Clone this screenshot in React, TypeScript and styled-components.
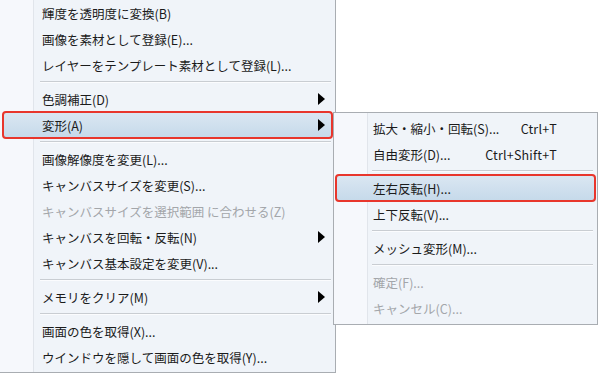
import styled, { createGlobalStyle } from "styled-components";

const colors = {
  page: "#ffffff",
  menu: "#f0f4f9",
  gutter: "#f6f8fc",
  gutterLine: "#e1e5eb",
  border: "#a9adb2",
  text: "#1b1b1b",
  disabled: "#a3a6aa",
  separator: "#c9cdd2",
  highlightTop: "#dbe7f2",
  highlightBottom: "#c5d9ea",
  annotation: "#e8362c",
};

const GlobalStyle = createGlobalStyle`
  html, body {
    margin: 0;
    padding: 0;
    background: ${colors.page};
  }
`;

const Screen = styled.div`
  display: flex;
  align-items: flex-start;
  width: 598px;
  height: 375px;
  overflow: hidden;
  background: ${colors.page};
  font-family: "Noto Sans CJK JP", "Noto Sans", sans-serif;
  font-size: 12.5px;
  color: ${colors.text};
`;

const Menu = styled.div<{ $width: number; $top: number; $pull: number; $bordered: boolean }>`
  display: flex;
  flex-direction: column;
  flex-shrink: 0;
  box-sizing: border-box;
  width: ${(p) => p.$width}px;
  margin-top: ${(p) => p.$top}px;
  margin-left: ${(p) => -p.$pull}px;
  padding: ${(p) => (p.$bordered ? "2px 0 3px" : "0 0 2px")};
  border: 1px solid ${colors.border};
  border-left-width: ${(p) => (p.$bordered ? 1 : 0)}px;
  border-top-width: ${(p) => (p.$bordered ? 1 : 0)}px;
  background: linear-gradient(
    to right,
    ${colors.gutter} 0,
    ${colors.gutter} 33px,
    ${colors.gutterLine} 33px,
    ${colors.gutterLine} 34px,
    ${colors.menu} 34px
  );
`;

const Item = styled.div<{ $pad: number; $right: number; $inset: number; $active?: boolean; $disabled?: boolean }>`
  position: relative;
  display: grid;
  grid-template-columns: 1fr auto auto;
  align-items: center;
  height: 26px;
  margin: 0 ${(p) => p.$inset}px;
  padding: 0 ${(p) => p.$right}px 0 ${(p) => p.$pad - p.$inset}px;
  white-space: nowrap;
  color: ${(p) => (p.$disabled ? colors.disabled : colors.text)};
  background: ${(p) =>
    p.$active
      ? `linear-gradient(to bottom, ${colors.highlightTop}, ${colors.highlightBottom})`
      : "transparent"};

  &::after {
    content: "";
    display: ${(p) => (p.$active ? "block" : "none")};
    position: absolute;
    inset: -1px -1px;
    border: 2px solid ${colors.annotation};
    border-radius: 4px;
  }
`;

const Shortcut = styled.span`
  justify-self: end;
  padding-left: 16px;
  letter-spacing: 0.2px;
`;

const Arrow = styled.span`
  width: 0;
  height: 0;
  border-left: 7px solid #000;
  border-top: 6px solid transparent;
  border-bottom: 6px solid transparent;
`;

const Separator = styled.div<{ $from: number; $to: number }>`
  height: 8px;
  margin: 0 ${(p) => p.$to}px 0 ${(p) => p.$from}px;
  display: flex;
  flex-direction: column;
  justify-content: center;

  &::before {
    content: "";
    height: 1px;
    background: ${colors.separator};
  }
  &::after {
    content: "";
    height: 1px;
    background: #fbfcfe;
  }
`;

type Entry =
  | { sep: true }
  | { label: string; shortcut?: string; sub?: boolean; active?: boolean; disabled?: boolean };

const mainItems: Entry[] = [
  { label: "輝度を透明度に変換(B)" },
  { label: "画像を素材として登録(E)..." },
  { label: "レイヤーをテンプレート素材として登録(L)..." },
  { sep: true },
  { label: "色調補正(D)", sub: true },
  { label: "変形(A)", sub: true, active: true },
  { sep: true },
  { label: "画像解像度を変更(L)..." },
  { label: "キャンバスサイズを変更(S)..." },
  { label: "キャンバスサイズを選択範囲 に合わせる(Z)", disabled: true },
  { label: "キャンバスを回転・反転(N)", sub: true },
  { label: "キャンバス基本設定を変更(V)..." },
  { sep: true },
  { label: "メモリをクリア(M)", sub: true },
  { sep: true },
  { label: "画面の色を取得(X)..." },
  { label: "ウインドウを隠して画面の色を取得(Y)..." },
];

const subItems: Entry[] = [
  { label: "拡大・縮小・回転(S)...", shortcut: "Ctrl+T" },
  { label: "自由変形(D)...", shortcut: "Ctrl+Shift+T" },
  { sep: true },
  { label: "左右反転(H)...", active: true },
  { label: "上下反転(V)..." },
  { sep: true },
  { label: "メッシュ変形(M)..." },
  { sep: true },
  { label: "確定(F)...", disabled: true },
  { label: "キャンセル(C)...", disabled: true },
];

function MenuList({
  items,
  pad,
  right,
  inset,
  sepFrom,
  sepTo,
}: {
  items: Entry[];
  pad: number;
  right: number;
  inset: number;
  sepFrom: number;
  sepTo: number;
}) {
  return (
    <>
      {items.map((it, i) =>
        "sep" in it ? (
          <Separator key={i} $from={sepFrom} $to={sepTo} />
        ) : (
          <Item
            key={i}
            $pad={pad}
            $right={right}
            $inset={inset}
            $active={it.active}
            $disabled={it.disabled}
          >
            <span>{it.label}</span>
            {it.shortcut ? <Shortcut>{it.shortcut}</Shortcut> : <span />}
            {it.sub ? <Arrow /> : <span />}
          </Item>
        )
      )}
    </>
  );
}

export default function App() {
  return (
    <Screen>
      <GlobalStyle />
      <Menu $width={336} $top={0} $pull={0} $bordered={false}>
        <MenuList items={mainItems} pad={42} right={7} inset={3} sepFrom={40} sepTo={4} />
      </Menu>
      <Menu $width={265} $top={112} $pull={3} $bordered={true}>
        <MenuList items={subItems} pad={39} right={38} inset={2} sepFrom={38} sepTo={4} />
      </Menu>
    </Screen>
  );
}
